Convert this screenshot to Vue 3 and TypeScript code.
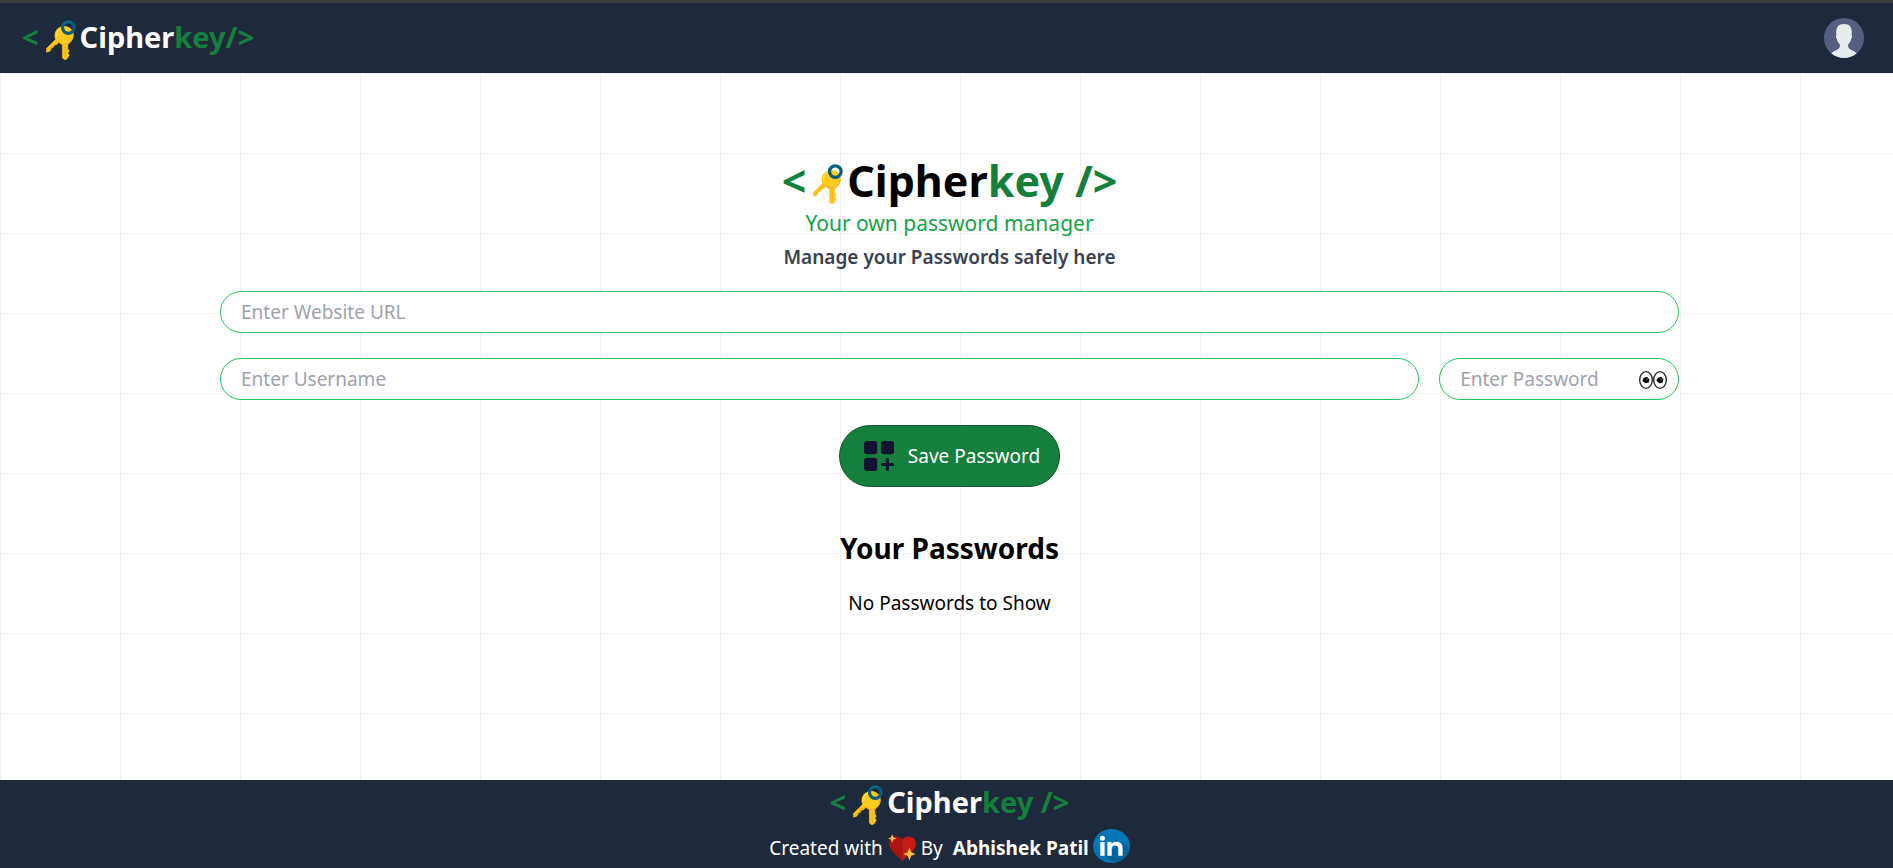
<script setup lang="ts">
import { h, ref } from 'vue'

const url = ref('')
const username = ref('')
const password = ref('')
const shown = ref(false)

const KeysIcon = () =>
  h('svg', { class: 'keys', viewBox: '0 0 30 46', 'aria-hidden': 'true' }, [
    h('path', {
      d: 'M10 25L0.4 34.6V38.2L3.4 37.4L5 35.6L5.2 33.8L7.2 33.6L8.2 31.2L10.4 30.8L14.4 27Z',
      fill: '#fdc413',
      stroke: '#fdc413',
      'stroke-width': 0.6,
      'stroke-linejoin': 'round',
    }),
    h('path', {
      d: 'M16.4 28V44L19.2 46L21.8 44V42.8L23 42V40.4L21.8 39.6V38.6L23 37.8V36.2L21.8 35.4V28Z',
      fill: '#fdc91b',
      stroke: '#fdc91b',
      'stroke-width': 0.6,
      'stroke-linejoin': 'round',
    }),
    h('path', {
      d: 'M17 12.2C20.6 11.6 26.4 14.2 27.4 18.6C28.4 23.6 26 27.6 22.4 30.2C19 32 15 30.8 12.6 28.4C8.6 26.4 7.8 21.8 9.2 18C10.6 14.4 13.4 12.6 17 12.2Z',
      fill: '#fdcb1d',
    }),
    h('path', { d: 'M10.6 22C10.4 17.6 13 14.4 16.6 14', fill: 'none', stroke: '#ffdd55', 'stroke-width': 1.2, 'stroke-linecap': 'round' }),
    h('path', { d: 'M13 28.2C15.6 30.6 19.6 31 22.4 29.6C25.4 27.6 27.2 24.6 27 21', fill: 'none', stroke: '#f4a51c', 'stroke-width': 1 }),
    h('path', { d: 'M1 37L12.4 27.4M19.2 32V44', fill: 'none', stroke: '#f0a818', 'stroke-width': 0.8 }),
    h('circle', { cx: 22.3, cy: 13.6, r: 5.8, fill: 'none', stroke: '#0b5b7d', 'stroke-width': 3.2 }),
    h('path', { d: 'M18 10C19.4 7.6 23 6.8 25.6 8.6', fill: 'none', stroke: '#17799a', 'stroke-width': 0.9 }),
  ])
</script>

<template>
  <div class="page">
    <header class="header">
      <a class="brand" href="#">
        <span class="green">&lt;</span><KeysIcon /><span>Cipher<span class="green">key/&gt;</span></span>
      </a>
      <button class="avatar" type="button" aria-label="Account">
        <svg viewBox="0 0 40 40" aria-hidden="true">
          <circle cx="20" cy="20" r="20" fill="#556080" />
          <path d="M7.4 35.5C9.2 33.2 14.6 31.8 15.6 29.6C16 28.4 16 27 15.5 25.8C13.8 24.4 13.1 22.8 12.8 20.8C11.8 20.3 11.8 18.4 12.4 17.6C11.6 10.4 13.4 6 20 6C26.6 6 28.4 10.4 27.6 17.6C28.2 18.4 28.2 20.3 27.2 20.8C26.9 22.8 26.2 24.4 24.5 25.8C24 27 24 28.4 24.4 29.6C25.4 31.8 30.8 33.2 32.6 35.5A20 20 0 0 1 7.4 35.5Z" fill="#e7eced" />
        </svg>
      </button>
    </header>

    <main class="main">
      <h1 class="brand title">
        <span class="green">&lt;</span><KeysIcon /><span>Cipher<span class="green">key /&gt;</span></span>
      </h1>
      <p class="tagline">Your own password manager</p>
      <p class="lead">Manage your Passwords safely here</p>

      <form class="form" @submit.prevent>
        <input v-model="url" class="field" type="text" placeholder="Enter Website URL" aria-label="Website URL" />
        <div class="row">
          <input v-model="username" class="field" type="text" placeholder="Enter Username" aria-label="Username" autocomplete="off" />
          <div class="secret">
            <input v-model="password" class="field" :type="shown ? 'text' : 'password'" placeholder="Enter Password" aria-label="Password" autocomplete="off" />
            <button class="eyes" type="button" aria-label="Show password" @click="shown = !shown">
              <svg viewBox="0 0 28 18" aria-hidden="true">
                <g fill="#fff" stroke="#1c1c1c" stroke-width="1.3">
                  <ellipse cx="7" cy="9" rx="6.3" ry="8.3" />
                  <ellipse cx="21" cy="9" rx="6.3" ry="8.3" />
                </g>
                <g fill="#000">
                  <path d="M3.4 9.4L5 6.8L8 5.8L10.4 8.2L9.8 11.4L6.8 12.2L4.8 11.2Z" />
                  <path d="M17.4 9.4L19 6.8L22 5.8L24.4 8.2L23.8 11.4L20.8 12.2L18.8 11.2Z" />
                </g>
                <g fill="#fff">
                  <circle cx="8" cy="8" r="0.6" />
                  <circle cx="22" cy="8" r="0.6" />
                </g>
              </svg>
            </button>
          </div>
        </div>
        <button class="save" type="submit">
          <svg viewBox="0 0 30 30" aria-hidden="true" fill="#121331">
            <rect width="13.2" height="13.2" rx="3" />
            <rect x="16.8" width="13.2" height="13.2" rx="3" />
            <rect y="16.8" width="13.2" height="13.2" rx="3" />
            <path d="M23.4 18.3V28.5M18.3 23.4H28.5" stroke="#121331" stroke-width="3" stroke-linecap="round" />
          </svg>
          Save Password
        </button>
      </form>

      <h2 class="subtitle">Your Passwords</h2>
      <p class="empty">No Passwords to Show</p>
    </main>

    <footer class="footer">
      <div class="brand">
        <span class="green">&lt;</span><KeysIcon /><span>Cipher<span class="green">key /&gt;</span></span>
      </div>
      <div class="credit">
        <span>Created with</span>
        <svg class="heart" viewBox="0 0 28 28" aria-hidden="true">
          <path d="M14.3 27.5C10 22 1.2 16.8 1.2 9.6C1.2 2.2 10.4 0 14.3 5.6Z" fill="#ad1410" />
          <path d="M14.3 27.5C18.6 22 28 16.8 28 9.6C28 2.2 18.2 0 14.3 5.6Z" fill="#c81b16" />
          <path d="M4.2 0L5.4 3.2L8.6 4.4L5.4 5.6L4.2 8.8L3 5.6L0 4.4L3 3.2Z" fill="#fbb938" />
          <path d="M21.4 13.6L23.2 18.2L27.8 20L23.2 21.8L21.4 26.4L19.6 21.8L15 20L19.6 18.2Z" fill="#fdbf3f" />
        </svg>
        <span>By</span>
        <a class="author" href="#">
          <strong>Abhishek Patil</strong>
          <svg class="linkedin" viewBox="0 0 37 38" aria-label="LinkedIn">
            <ellipse cx="18.5" cy="17" rx="18.5" ry="17" fill="#0077b7" />
            <path d="M11.6 26.6L19 33.9A18.5 17 0 0 0 36.6 20L29.6 13.6Z" fill="#066598" />
            <g fill="#fff">
              <circle cx="9.4" cy="9.2" r="2.5" />
              <rect x="7.3" y="13" width="4.3" height="13.8" />
              <path d="M14.4 13H18.5V14.9C20.8 11.6 29.6 11.3 29.6 18.6V26.8H25.3V19.7C25.3 15.2 18.7 15.4 18.7 19.7V26.8H14.4Z" />
            </g>
          </svg>
        </a>
      </div>
    </footer>
  </div>
</template>

<style>
body {
  margin: 0;
}
</style>

<style scoped>
.page {
  box-sizing: border-box;
  min-height: 100vh;
  display: flex;
  flex-direction: column;
  border-top: 3px solid #3d3b3c;
  background: #fff;
  color: #000;
  font: 19px/30px "Noto Sans", "Open Sans", sans-serif;
}

.page * {
  box-sizing: border-box;
}

h1,
h2,
p {
  margin: 0;
}

a {
  color: inherit;
  text-decoration: none;
}

button {
  border: 0;
  padding: 0;
  background: none;
  font: inherit;
  cursor: pointer;
}

svg {
  display: block;
  flex: none;
}

.header {
  display: flex;
  align-items: center;
  justify-content: space-between;
  height: 70px;
  padding: 0 29px 0 22px;
  background: #1e293b;
  color: #fff;
}

.header .brand {
  padding-bottom: 2px;
}

.brand {
  display: flex;
  align-items: center;
  font-size: 29px;
  font-weight: 700;
  line-height: 44px;
}

.green {
  color: #15803d;
}

.keys {
  width: 30px;
  height: 46px;
  margin: 0 4px 0 7px;
}

.avatar svg {
  width: 40px;
  height: 40px;
}

.main {
  flex: 1;
  display: flex;
  flex-direction: column;
  align-items: center;
  padding: 83px 214px 40px 220px;
  background-color: #fff;
  background-image:
    linear-gradient(to right, #f0f0f0 1px, transparent 1px),
    linear-gradient(to bottom, #f0f0f0 1px, transparent 1px);
  background-size: 120px 80px;
}

.title {
  font-size: 43px;
  line-height: 50px;
}

.tagline {
  color: #16a34a;
  font-size: 21px;
  line-height: 34px;
}

.lead {
  color: #374151;
  font-weight: 600;
  line-height: 34px;
}

.form {
  align-self: stretch;
  display: flex;
  flex-direction: column;
  align-items: center;
  gap: 25px;
  margin-top: 17px;
}

.field {
  width: 100%;
  height: 42px;
  padding: 0 20px;
  border: 1px solid #22c55e;
  border-radius: 21px;
  outline: none;
  background: #fff;
  color: #000;
  font: inherit;
}

.field::placeholder {
  color: #9ca3af;
  opacity: 1;
}

.row {
  display: grid;
  grid-template-columns: 5fr 1fr;
  gap: 20px;
  width: 100%;
}

.secret {
  position: relative;
}

.secret .field {
  padding-right: 48px;
}

.eyes {
  position: absolute;
  top: 13px;
  right: 12px;
}

.eyes svg {
  width: 28px;
  height: 18px;
}

.save {
  display: flex;
  align-items: center;
  gap: 14px;
  height: 62px;
  padding: 0 19px 0 24px;
  border: 1px solid #14532d;
  border-radius: 31px;
  background: #15803d;
  color: #fff;
}

.save svg {
  width: 30px;
  height: 30px;
}

.subtitle {
  margin-top: 41px;
  font-size: 28px;
  font-weight: 700;
  line-height: 40px;
}

.empty {
  margin-top: 20px;
}

.footer {
  display: flex;
  flex-direction: column;
  align-items: center;
  gap: 4px;
  padding-left: 6px;
  background: #1e293b;
  color: #fff;
}

.footer .brand {
  height: 44px;
}

.credit,
.author {
  display: flex;
  align-items: center;
}

.credit {
  gap: 5px;
  height: 40px;
}

.author {
  gap: 4px;
  margin-left: 5px;
}

.heart {
  width: 28px;
  height: 28px;
}

.linkedin {
  width: 37px;
  height: 38px;
}
</style>
